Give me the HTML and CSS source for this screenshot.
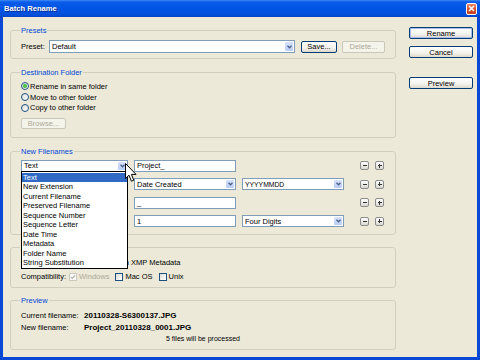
FILE: index.html
```html
<!DOCTYPE html>
<html lang="en">
<head>
    <meta charset="UTF-8">
    <title>Batch Rename</title>
    <link rel="stylesheet" href="styles.css">
</head>
<body>

<div class="window">
    <div class="titlebar">
        <span class="title">Batch Rename</span>
        <span class="close">
            <svg width="7" height="7" viewBox="0 0 7 7"><path d="M1 1 L6 6 M6 1 L1 6" stroke="#fff" stroke-width="1.6"/></svg>
        </span>
    </div>

    <div class="frame">
        <div class="main">
            <fieldset class="group presets">
                <legend>Presets</legend>
                <div class="preset-row">
                    <span class="label">Preset:</span>
                    <div class="select tall grow"><span>Default</span><i class="arrow"><svg width="5" height="4" viewBox="0 0 5 4"><path d="M0.5 0.8 L2.5 2.8 L4.5 0.8" fill="none" stroke="#4D6185" stroke-width="1.3"/></svg></i></div>
                    <button class="btn save">Save...</button>
                    <button class="btn delete" disabled>Delete...</button>
                </div>
            </fieldset>

            <fieldset class="group destination">
                <legend>Destination Folder</legend>
                <div class="radio checked"><i></i>Rename in same folder</div>
                <div class="radio"><i></i>Move to other folder</div>
                <div class="radio"><i></i>Copy to other folder</div>
                <button class="btn browse" disabled>Browse...</button>
            </fieldset>

            <fieldset class="group names">
                <legend>New Filenames</legend>
                <div class="name-grid">
                    <div class="cell">
                        <div class="select"><span>Text</span><i class="arrow"><svg width="5" height="4" viewBox="0 0 5 4"><path d="M0.5 0.8 L2.5 2.8 L4.5 0.8" fill="none" stroke="#4D6185" stroke-width="1.3"/></svg></i></div>
                        <ul class="dropdown">
                            <li class="active">Text</li>
                            <li>New Extension</li>
                            <li>Current Filename</li>
                            <li>Preserved Filename</li>
                            <li>Sequence Number</li>
                            <li>Sequence Letter</li>
                            <li>Date Time</li>
                            <li>Metadata</li>
                            <li>Folder Name</li>
                            <li>String Substitution</li>
                        </ul>
                        <svg class="cursor" width="12" height="19" viewBox="0 0 12 19"><path d="M0.5 0.5 V15.5 L4 12.2 L6.4 18.2 L8.8 17.2 L6.4 11.4 H11 Z" fill="#fff" stroke="#000"/></svg>
                    </div>
                    <div class="input">Project_</div>
                    <div></div>
                    <div></div>
                    <span class="pm minus"></span>
                    <span class="pm plus"></span>

                    <!-- first column of rows 2-4 sits under the open list -->
                    <div class="select"><span></span><i class="arrow"></i></div>
                    <div class="select"><span>Date Created</span><i class="arrow"><svg width="5" height="4" viewBox="0 0 5 4"><path d="M0.5 0.8 L2.5 2.8 L4.5 0.8" fill="none" stroke="#4D6185" stroke-width="1.3"/></svg></i></div>
                    <div class="select"><span class="small">YYYYMMDD</span><i class="arrow"><svg width="5" height="4" viewBox="0 0 5 4"><path d="M0.5 0.8 L2.5 2.8 L4.5 0.8" fill="none" stroke="#4D6185" stroke-width="1.3"/></svg></i></div>
                    <div></div>
                    <span class="pm minus"></span>
                    <span class="pm plus"></span>

                    <div class="select"><span></span><i class="arrow"></i></div>
                    <div class="input">_</div>
                    <div></div>
                    <div></div>
                    <span class="pm minus"></span>
                    <span class="pm plus"></span>

                    <div class="select"><span></span><i class="arrow"></i></div>
                    <div class="input">1</div>
                    <div class="select"><span>Four Digits</span><i class="arrow"><svg width="5" height="4" viewBox="0 0 5 4"><path d="M0.5 0.8 L2.5 2.8 L4.5 0.8" fill="none" stroke="#4D6185" stroke-width="1.3"/></svg></i></div>
                    <div></div>
                    <span class="pm minus"></span>
                    <span class="pm plus"></span>
                </div>
            </fieldset>

            <fieldset class="group options">
                <legend>Options</legend>
                <div class="check-row">
                    <span class="check"><i></i>Preserve Current Filename in XMP Metadata</span>
                </div>
                <div class="check-row">
                    <span class="label">Compatibility:</span>
                    <span class="check disabled checked"><i><svg width="6" height="6" viewBox="0 0 6 6"><path d="M0.8 3 L2.3 4.5 L5.2 1.2" fill="none" stroke="#B9B7AA" stroke-width="1.2"/></svg></i>Windows</span>
                    <span class="check"><i></i>Mac OS</span>
                    <span class="check"><i></i>Unix</span>
                </div>
            </fieldset>

            <fieldset class="group preview">
                <legend>Preview</legend>
                <div class="preview-grid">
                    <span>Current filename:</span><b>20110328-S6300137.JPG</b>
                    <span>New filename:</span><b>Project_20110328_0001.JPG</b>
                </div>
                <p class="count">5 files will be processed</p>
            </fieldset>
        </div>

        <div class="side">
            <button class="btn default">Rename</button>
            <button class="btn cancel">Cancel</button>
            <button class="btn preview-btn">Preview</button>
        </div>
    </div>
</div>

</body>
</html>
```

FILE: styles.css
```css
* {
    box-sizing: border-box;
}

body {
    font-family: 'Liberation Sans', Arial, sans-serif;
    font-size: 7.5px;
    margin: 0;
    padding: 0;
    color: #000;
}

.window {
    width: 480px;
    height: 360px;
    background: #ECE9D8;
    display: flex;
    flex-direction: column;
    overflow: hidden;
}

.titlebar {
    height: 17px;
    background: linear-gradient(#3C8CF7 0, #0A5BEA 2px, #0054E3 9px, #0050DD 14px, #0046C8 17px);
    display: flex;
    justify-content: space-between;
    align-items: center;
    padding: 0 3px 0 4px;
}

.title {
    color: white;
    font-weight: bold;
    font-size: 7.6px;
    text-shadow: 1px 1px 0 #0A2A8A;
}

.close {
    width: 11px;
    height: 12px;
    border: 1px solid #fff;
    border-radius: 2px;
    background: linear-gradient(#E8866A, #D9512C 50%, #C3401C);
    display: flex;
    align-items: center;
    justify-content: center;
}

.frame {
    flex: 1;
    display: flex;
    border: solid #0848D4;
    border-width: 0 3px 3px 3px;
}

.main {
    width: 386px;
    margin-left: 7px;
    padding-top: 9px;
}

.side {
    width: 64px;
    margin-left: 13px;
    padding-top: 10px;
    display: flex;
    flex-direction: column;
}

/* group boxes */
.group {
    border: 1px solid #D0D0BF;
    border-radius: 3px;
    margin: 8px 0 0;
    padding: 4px 10px 5px;
    min-width: 0;
}

.group:first-child {
    margin-top: 0;
}

.group legend {
    color: #0046D5;
    line-height: 9px;
    padding: 0 1px;
    margin-left: -1px;
}

.presets { padding-top: 5px; padding-bottom: 5px; }
.destination { margin-top: 9px; padding-bottom: 8px; }
.names { margin-top: 9px; padding-bottom: 7px; }
.options { padding-top: 4.5px; }

/* controls */
.btn {
    font: inherit;
    height: 12px;
    padding: 0;
    border: 1px solid #003C74;
    border-radius: 2px;
    background: linear-gradient(#FFFFFF, #F3F2EC 60%, #DCD8CC);
    color: #000;
    line-height: 9px;
}

.btn:disabled {
    border-color: #C9C7BA;
    background: #F5F4EA;
    color: #ACA899;
}

.btn.default {
    box-shadow: inset 0 0 0 1px #A9BEEF;
}

.cancel { margin-top: 7px; }
.preview-btn { margin-top: 19px; }

.preset-row {
    display: flex;
    align-items: center;
    gap: 5px;
}

.preset-row .label {
    width: 23px;
}

.save { width: 36px; margin-left: 1px; }
.delete { width: 43px; }

.grow { flex: 1; }

.select, .input {
    height: 12px;
    background: #fff;
    border: 1px solid #7F9DB9;
    display: flex;
    align-items: center;
}

.select.tall { height: 13px; }

.select span, .input {
    padding-left: 2px;
    white-space: nowrap;
    overflow: hidden;
}

.select span {
    flex: 1;
}

.select .small {
    font-size: 6.8px;
}

.arrow {
    width: 10px;
    height: 100%;
    border: 1px solid #fff;
    border-radius: 2px;
    background: linear-gradient(#D6E3FD, #B9CDF7);
    display: flex;
    align-items: center;
    justify-content: center;
}

.radio {
    height: 10.7px;
    display: flex;
    align-items: center;
    gap: 1px;
}

.radio i, .check i {
    width: 8px;
    height: 8px;
    border: 1px solid #1C5180;
    background: linear-gradient(135deg, #DCDCD7, #FFFFFF);
    display: flex;
    align-items: center;
    justify-content: center;
}

.radio i {
    border-radius: 50%;
}

.radio.checked i::after {
    content: "";
    width: 4px;
    height: 4px;
    border-radius: 50%;
    background: radial-gradient(#55D455, #21A121);
}

.browse {
    width: 45px;
    height: 11px;
    margin-top: 4.5px;
}

.name-grid {
    display: grid;
    grid-template-columns: 107px 102px 102px 1fr 9px 9px;
    grid-auto-rows: 12px;
    column-gap: 6px;
    row-gap: 6.5px;
    align-items: center;
    padding-right: 1px;
}

.cell {
    position: relative;
}

.pm {
    width: 9px;
    height: 9px;
    border: 1px solid #8A8C8E;
    border-radius: 2px;
    background: linear-gradient(#FFFFFF, #D9D7CF);
    position: relative;
}

.pm::before, .plus::after {
    content: "";
    position: absolute;
    background: #333;
    left: 1.5px;
    top: 3px;
    width: 4px;
    height: 1.2px;
}

.plus::after {
    left: 3px;
    top: 1.5px;
    width: 1.2px;
    height: 4px;
}

.dropdown {
    position: absolute;
    top: 11px;
    left: 0;
    width: 107px;
    margin: 0;
    padding: 1px 0 0;
    list-style: none;
    background: #fff;
    border: 1px solid #000;
    z-index: 10;
}

.dropdown li {
    height: 9.5px;
    line-height: 9.5px;
    padding-left: 1px;
}

.dropdown li.active {
    background: #316AC5;
    color: white;
}

.cursor {
    position: absolute;
    left: 104px;
    top: 3px;
    z-index: 11;
}

.check-row {
    height: 11px;
    display: flex;
    align-items: center;
}

.check-row + .check-row {
    margin-top: 3.5px;
}

.check {
    display: flex;
    align-items: center;
    gap: 2px;
    margin-right: 6px;
}

.check-row .label {
    margin-right: 3px;
}

.check.disabled {
    color: #ACA899;
}

.check.disabled i {
    border-color: #CAC8BB;
    background: #fff;
}

.preview-grid {
    display: grid;
    grid-template-columns: 63px auto;
    grid-auto-rows: 12px;
    align-items: center;
}

.preview-grid b {
    font-size: 8px;
}

.count {
    margin: 0;
    height: 11px;
    line-height: 11px;
    text-align: center;
    font-size: 7px;
}
```
